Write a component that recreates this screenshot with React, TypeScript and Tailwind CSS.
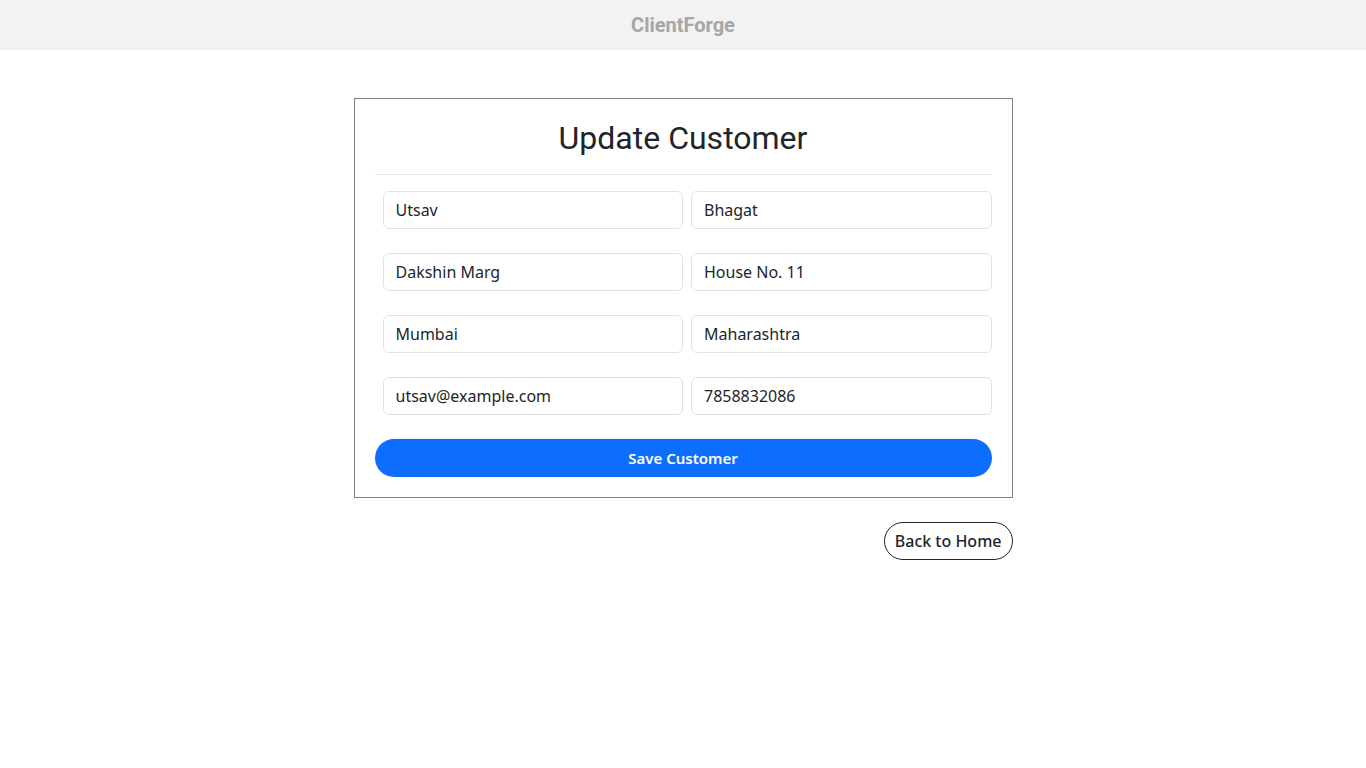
const fields = [
  ["Utsav", "Bhagat"],
  ["Dakshin Marg", "House No. 11"],
  ["Mumbai", "Maharashtra"],
  ["utsav@example.com", "7858832086"],
];

const App = () => {
  return (
    <div className="min-h-screen bg-white font-['Noto_Sans',sans-serif] text-[#212529]">
      <header className="h-[50px] bg-[#f2f2f2] flex items-center justify-center">
        <span className="font-['Roboto',sans-serif] font-bold text-xl text-[#a6a6a6]">
          ClientForge
        </span>
      </header>

      <div className="w-[659px] mx-auto mt-12">
        <div className="border border-[#808080] px-5 pt-5 pb-5">
          <h2 className="font-['Roboto',sans-serif] text-[32px] leading-[38px] text-center text-[#212529]">
            Update Customer
          </h2>
          <hr className="mt-[17px] border-t border-[#e9e9e9]" />
          <div className="mt-4 pl-2 flex flex-col gap-6">
            {fields.map((row, i) => (
              <div key={i} className="grid grid-cols-2 gap-2">
                {row.map((v) => (
                  <input
                    key={v}
                    defaultValue={v}
                    className="h-[38px] w-full rounded-md border border-[#dee2e6] px-3 text-base text-[#212529] outline-none"
                  />
                ))}
              </div>
            ))}
          </div>
          <button className="mt-6 w-full h-[38px] rounded-full bg-[#0d6efd] text-white font-semibold text-[15px]">
            Save Customer
          </button>
        </div>
        <div className="flex justify-end mt-6">
          <button className="h-[38px] px-[10px] rounded-full border border-[#212529] text-base font-medium text-[#212529]">
            Back to Home
          </button>
        </div>
      </div>
    </div>
  );
};

export default App;
